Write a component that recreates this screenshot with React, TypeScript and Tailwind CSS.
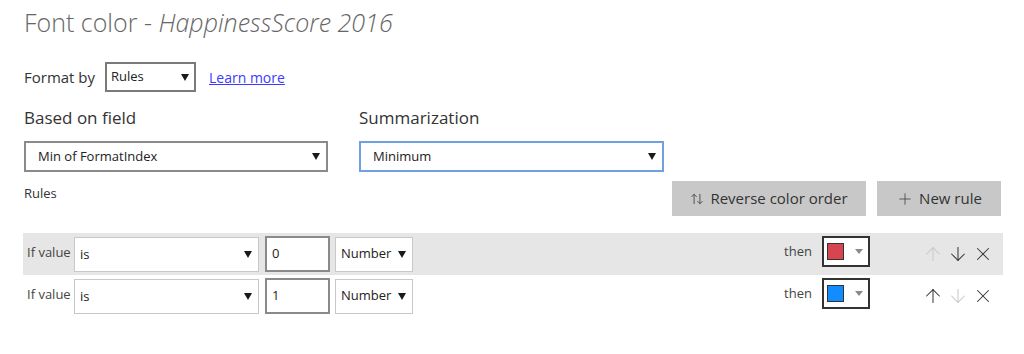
import React from "react";
import { ArrowUp, ArrowDown, X, Plus, ArrowUpDown } from "lucide-react";

const font = { fontFamily: '"Open Sans", "Noto Sans", sans-serif' };

const Caret = ({ color = "#1a1a1a" }: { color?: string }) => (
  <svg width="8" height="7" viewBox="0 0 8 7">
    <path d="M0 0h8L4 7z" fill={color} />
  </svg>
);

type Rule = { value: string; swatch: string; upOff: boolean; downOff: boolean; shaded: boolean };

const rules: Rule[] = [
  { value: "0", swatch: "#d64550", upOff: true, downOff: false, shaded: true },
  { value: "1", swatch: "#118dff", upOff: false, downOff: true, shaded: false },
];

const RuleRow = ({ rule }: { rule: Rule }) => (
  <div
    className={`flex h-[42px] items-center pl-[4px] pr-[9px] ${
      rule.shaded ? "bg-[#e6e6e6]" : "bg-white"
    }`}
  >
    <span className="text-[13px] text-[#444] w-[47px] -mt-[3px]">If value</span>
    <div className="flex h-[35px] w-[185px] items-center justify-between border border-[#c8c8c8] bg-white pl-[5px] pr-[6px] text-[13px] text-[#222]">
      <span className="pt-[2px]">is</span>
      <Caret />
    </div>
    <div className="ml-[6px] flex h-[36px] w-[65px] items-center border-2 border-[#8a8a8a] bg-white pl-[5px] text-[13px] text-[#222]">
      {rule.value}
    </div>
    <div className="ml-[5px] flex h-[35px] w-[78px] items-center justify-between border border-[#c8c8c8] bg-white pl-[5px] pr-[6px] text-[13px] text-[#222]">
      <span>Number</span>
      <Caret />
    </div>
    <div className="flex-1" />
    <span className="text-[13px] text-[#444] -mt-[4px]">then</span>
    <div className="ml-[10px] -mt-[5px] flex h-[31px] w-[48px] items-center border-2 border-[#333] bg-white pl-[3px]">
      <div className="h-[17px] w-[17px] border border-[#333]" style={{ backgroundColor: rule.swatch }} />
      <div className="ml-[11px]">
        <svg width="8" height="5" viewBox="0 0 8 5">
          <path d="M0 0h8L4 5z" fill="#8a8a8a" />
        </svg>
      </div>
    </div>
    <div className="ml-[52px] flex items-center gap-[3px]">
      <ArrowUp size={22} strokeWidth={1.1} color={rule.upOff ? "#c8c8c8" : "#333"} />
      <ArrowDown size={22} strokeWidth={1.1} color={rule.downOff ? "#c8c8c8" : "#333"} />
      <X size={22} strokeWidth={1.1} color="#333" />
    </div>
  </div>
);

export default function App() {
  return (
    <div className="w-[1024px] h-[354px] bg-white pl-6 pr-[21px] pt-[4px]" style={font}>
      <h1 className="text-[25px] leading-[36px] font-light text-[#666]">
        Font color - <span className="italic">HappinessScore 2016</span>
      </h1>

      <div className="mt-[22px] flex items-center">
        <span className="text-[15px] text-[#333] w-[81px]">Format by</span>
        <div className="flex h-[30px] w-[91px] items-center justify-between border-2 border-[#7a7a7a] pl-[4px] pr-[5px] text-[13px] text-[#222]">
          <span>Rules</span>
          <Caret />
        </div>
        <a className="ml-[13px] text-[14px] text-[#3b3bff] underline" href="#">
          Learn more
        </a>
      </div>

      <div className="mt-[14px] flex gap-[31px]">
        <div className="w-[304px]">
          <div className="text-[17px] leading-[24px] text-[#333]">Based on field</div>
          <div className="mt-[11px] flex h-[31px] items-center justify-between border-2 border-[#8a8a8a] pl-[12px] pr-[6px] text-[13px] text-[#222]">
            <span>Min of FormatIndex</span>
            <Caret />
          </div>
        </div>
        <div className="w-[305px]">
          <div className="text-[17px] leading-[24px] text-[#333]">Summarization</div>
          <div className="mt-[11px] flex h-[31px] items-center justify-between border-2 border-[#6fa0e0] pl-[12px] pr-[6px] text-[13px] text-[#222]">
            <span>Minimum</span>
            <Caret />
          </div>
        </div>
      </div>

      <div className="mt-[9px] flex items-start pr-[2px]">
        <span className="pt-[3px] text-[13px] leading-[18px] text-[#333]">Rules</span>
        <div className="flex-1" />
        <button className="flex h-[35px] w-[194px] items-center justify-center gap-[6px] bg-[#c8c8c8] text-[15px] text-[#333]">
          <ArrowUpDown size={14} strokeWidth={1.5} color="#444" />
          Reverse color order
        </button>
        <button className="ml-[11px] flex h-[35px] w-[124px] items-center justify-center gap-[5px] bg-[#c8c8c8] text-[15px] text-[#333]">
          <Plus size={18} strokeWidth={1.1} color="#444" />
          New rule
        </button>
      </div>

      <div className="mt-[17px] -ml-px">
        {rules.map((r, i) => (
          <RuleRow key={i} rule={r} />
        ))}
      </div>
    </div>
  );
}
